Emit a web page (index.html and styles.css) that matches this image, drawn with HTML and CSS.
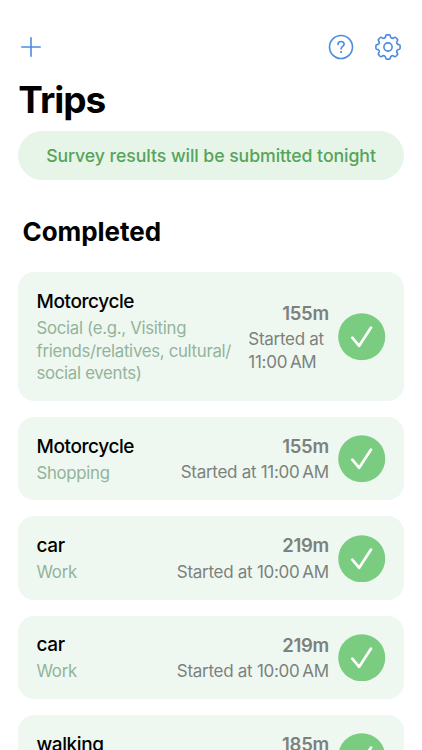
FILE: index.html
```html
<!DOCTYPE html>
<html lang="en">
<head>
<meta charset="utf-8">
<title>Trips</title>
<link rel="stylesheet" href="styles.css">
</head>
<body>
<svg class="defs" width="0" height="0">
  <symbol id="check" viewBox="0 0 48 48"><circle cx="24" cy="24" r="23.8" fill="#7acd80"/><path d="M14.4 25L21.4 33.1L33.4 14.7" fill="none" stroke="#fff" stroke-width="2.7" stroke-linecap="round" stroke-linejoin="round"/></symbol>
</svg>
<div class="screen">
  <nav class="toolbar">
    <svg class="icon" viewBox="-14 -14 28 28"><path d="M-9.2 0H9.2M0 -9.2V9.2"/></svg>
    <div class="actions">
      <svg class="icon" viewBox="-14 -14 28 28"><circle r="11.5"/><path d="M-3 -2.6C-3 -4.6 -1.7 -5.5 0.1 -5.5C1.9 -5.5 3.1 -4.4 3.1 -2.8C3.1 -0.5 0.1 -0.5 0.1 2"/><circle class="dot" cx="0.1" cy="5" r="1.1"/></svg>
      <svg class="icon" viewBox="-14 -14 28 28">
        <path id="tooth" d="M-2.6 -9.8L-2.2 -11.4Q-2 -12.1 -1.3 -12.1H1.3Q2 -12.1 2.2 -11.4L2.6 -9.8Q3.44 -8.3 5.09 -8.77"/>
        <use href="#tooth" transform="rotate(45)"/><use href="#tooth" transform="rotate(90)"/><use href="#tooth" transform="rotate(135)"/><use href="#tooth" transform="rotate(180)"/><use href="#tooth" transform="rotate(225)"/><use href="#tooth" transform="rotate(270)"/><use href="#tooth" transform="rotate(315)"/>
        <circle r="4.1"/>
      </svg>
    </div>
  </nav>
  <h1>Trips</h1>
  <div class="banner"><span>Survey results will be submitted tonight</span></div>
  <h2>Completed</h2>
  <main class="list">
    <article class="card">
      <div class="info"><h3>Motorcycle</h3><p class="purpose">Social (e.g., Visiting<br>friends/relatives, cultural/<br>social events)</p></div>
      <div class="stats"><strong>155m</strong><p class="start wrapped">Started at<br>11:00&#8239;AM</p></div>
      <svg class="check"><use href="#check"/></svg>
    </article>
    <article class="card">
      <div class="info"><h3>Motorcycle</h3><p class="purpose">Shopping</p></div>
      <div class="stats"><strong>155m</strong><p class="start">Started at 11:00&#8239;AM</p></div>
      <svg class="check"><use href="#check"/></svg>
    </article>
    <article class="card">
      <div class="info"><h3>car</h3><p class="purpose">Work</p></div>
      <div class="stats"><strong>219m</strong><p class="start">Started at 10:00&#8239;AM</p></div>
      <svg class="check"><use href="#check"/></svg>
    </article>
    <article class="card">
      <div class="info"><h3>car</h3><p class="purpose">Work</p></div>
      <div class="stats"><strong>219m</strong><p class="start">Started at 10:00&#8239;AM</p></div>
      <svg class="check"><use href="#check"/></svg>
    </article>
    <article class="card partial">
      <div class="info"><h3>walking</h3></div>
      <div class="stats"><strong>185m</strong></div>
      <svg class="check"><use href="#check"/></svg>
    </article>
  </main>
</div>
</body>
</html>
```
FILE: styles.css
```css
* { box-sizing: border-box; margin: 0; padding: 0; }
body { background: #fff; color: #000; font-family: Inter, "Liberation Sans", sans-serif; overflow: hidden; }
.defs { display: none; }
.screen { height: 750px; overflow: hidden; padding: 33.4px 18.3px 0; }
.toolbar { display: flex; justify-content: space-between; height: 28px; padding: 0 1.4px 0 0; margin-left: -1.5px; }
.actions { display: flex; gap: 19.8px; }
.icon { width: 28px; height: 28px; fill: none; stroke: #4d8be0; stroke-width: 1.6; stroke-linecap: round; stroke-linejoin: round; }
.dot { fill: #4d8be0; stroke: none; }
h1 { font-size: 37px; line-height: 46px; font-weight: 700; letter-spacing: -1px; margin-top: 15.6px; }
.banner { display: flex; align-items: center; justify-content: center; height: 49.2px; margin-top: 7.7px; border-radius: 25px; background: #e6f5e8; color: #56a45c; font-size: 17.7px; font-weight: 500; letter-spacing: -0.07px; white-space: nowrap; }
h2 { font-size: 26px; line-height: 34px; font-weight: 700; letter-spacing: -0.05px; margin: 35.5px 0 0 4.2px; }
.list { display: flex; flex-direction: column; gap: 16.1px; margin-top: 22.9px; }
.card { display: flex; flex: none; align-items: center; min-height: 83.3px; padding: 16.8px 18.2px 15.9px; border-radius: 16px; background: #eef8f1; white-space: nowrap; }
.info { flex: 1; min-width: 0; }
h3 { font-size: 19px; line-height: 25px; font-weight: 500; letter-spacing: -0.4px; margin-bottom: 3px; }
.purpose { font-size: 16.8px; line-height: 22.6px; color: #94b39b; letter-spacing: -0.3px; }
.stats { display: flex; flex-direction: column; align-items: flex-end; color: #7c817d; }
.stats strong { font-size: 18.5px; line-height: 25px; font-weight: 600; letter-spacing: -0.3px; margin-bottom: 2.6px; }
.start { font-size: 17px; line-height: 22.6px; letter-spacing: -0.28px; }
.start.wrapped { width: 80.5px; }
.check { width: 47.5px; height: 47.5px; margin-left: 9.2px; flex: none; }
.partial .info, .partial .stats { align-self: flex-start; }
```
